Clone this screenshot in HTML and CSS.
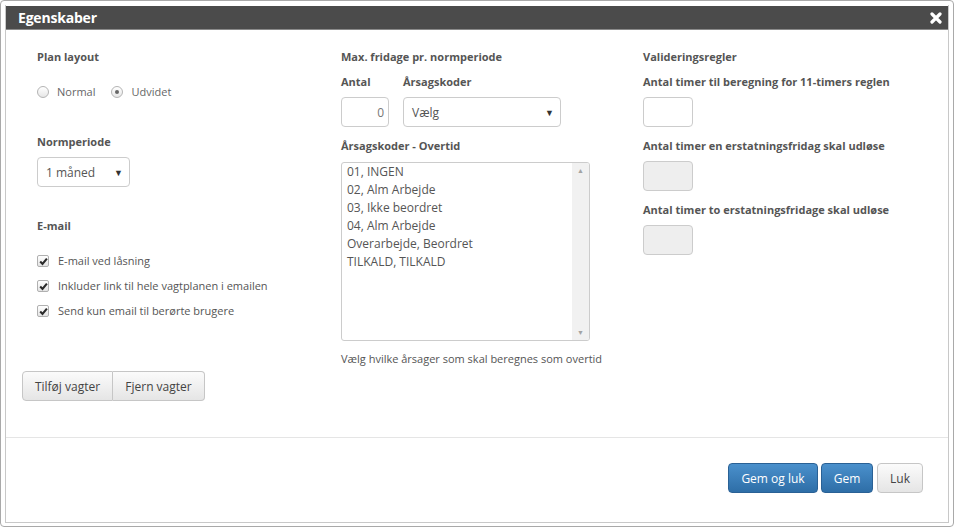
FILE: index.html
```html
<!DOCTYPE html>
<html lang="da">
<head>
<meta charset="utf-8">
<title>Egenskaber</title>
<link rel="stylesheet" href="styles.css">
</head>
<body>
<div class="dialog">
  <div class="frame">
    <div class="titlebar">
      <span class="title">Egenskaber</span>
      <span class="close"><svg width="12" height="12" viewBox="0 0 12 12"><path d="M2 2 L10 10 M10 2 L2 10" stroke="#fff" stroke-width="3.2" stroke-linecap="round"/></svg></span>
    </div>
    <div class="content">
      <div class="cols">
        <div class="col">
          <div class="lbl">Plan layout</div>
          <div class="radios">
            <span class="opt"><span class="radio"></span>Normal</span>
            <span class="opt"><span class="radio on"></span>Udvidet</span>
          </div>
          <div class="lbl mt32">Normperiode</div>
          <div class="select s-norm"><span>1 måned</span><span class="caret">▼</span></div>
          <div class="lbl mt30">E-mail</div>
          <div class="check first"><span class="box"><svg width="9" height="9" viewBox="0 0 9 9"><path d="M1.2 4.6 L3.5 7 L7.9 1.6" stroke="#2b2b2b" stroke-width="2.1" fill="none"/></svg></span>E-mail ved låsning</div>
          <div class="check"><span class="box"><svg width="9" height="9" viewBox="0 0 9 9"><path d="M1.2 4.6 L3.5 7 L7.9 1.6" stroke="#2b2b2b" stroke-width="2.1" fill="none"/></svg></span>Inkluder link til hele vagtplanen i emailen</div>
          <div class="check"><span class="box"><svg width="9" height="9" viewBox="0 0 9 9"><path d="M1.2 4.6 L3.5 7 L7.9 1.6" stroke="#2b2b2b" stroke-width="2.1" fill="none"/></svg></span>Send kun email til berørte brugere</div>
        </div>
        <div class="col">
          <div class="lbl">Max. fridage pr. normperiode</div>
          <div class="pair">
            <div class="pcol">
              <div class="lbl">Antal</div>
              <div class="input num"><span class="numval">0</span></div>
            </div>
            <div class="pcol">
              <div class="lbl">Årsagskoder</div>
              <div class="select s-aars"><span>Vælg</span><span class="caret">▼</span></div>
            </div>
          </div>
          <div class="lbl mt10">Årsagskoder - Overtid</div>
          <div class="listbox">
            <div class="items">
              <div>01, INGEN</div>
              <div>02, Alm Arbejde</div>
              <div>03, Ikke beordret</div>
              <div>04, Alm Arbejde</div>
              <div>Overarbejde, Beordret</div>
              <div>TILKALD, TILKALD</div>
            </div>
            <div class="scroll"><span class="arr">▲</span><span class="arr">▼</span></div>
          </div>
          <div class="help">Vælg hvilke årsager som skal beregnes som overtid</div>
        </div>
        <div class="col">
          <div class="lbl">Valideringsregler</div>
          <div class="lbl mt7">Antal timer til beregning for 11-timers reglen</div>
          <div class="input small"></div>
          <div class="lbl mt10">Antal timer en erstatningsfridag skal udløse</div>
          <div class="input small dis"></div>
          <div class="lbl mt10">Antal timer to erstatningsfridage skal udløse</div>
          <div class="input small dis"></div>
        </div>
      </div>
      <div class="btngroup">
        <span class="btn">Tilføj vagter</span><span class="btn">Fjern vagter</span>
      </div>
    </div>
    <div class="footer">
      <span class="btn primary wide">Gem og luk</span>
      <span class="btn primary">Gem</span>
      <span class="btn">Luk</span>
    </div>
  </div>
</div>
</body>
</html>
```
FILE: styles.css
```css
html, body {
  margin: 0;
  padding: 0;
  background: #fff;
}
body {
  font-family: "Open Sans", "Noto Sans", sans-serif;
  color: #555;
  font-size: 11px;
}
.dialog {
  width: 954px;
  height: 527px;
  box-sizing: border-box;
  border: 1px solid #a9a9a9;
  border-radius: 4px;
  padding: 4px 4px 3px 4px;
  display: flex;
  flex-direction: column;
}
.frame {
  flex: 1;
  border: 1px solid #c8c8c8;
  border-top: none;
  display: flex;
  flex-direction: column;
}
.titlebar {
  height: 23px;
  margin: 1px 0 0 0;
  background: #4b4b4b;
  border-bottom: 1px solid #8a8a8a;
  display: flex;
  align-items: center;
  justify-content: space-between;
  padding: 0 6px 0 12px;
}
.title {
  color: #fff;
  font-weight: 700;
  font-size: 14px;
  letter-spacing: -0.2px;
}
.close {
  display: flex;
  width: 12px;
  height: 12px;
}
.content {
  height: 407px;
  box-sizing: border-box;
  padding: 18px 15px 0 16px;
}
.cols {
  display: grid;
  grid-template-columns: 304px 302px 1fr;
  height: 319px;
}
.col {
  padding-left: 15px;
}
.lbl {
  font-weight: 700;
  font-size: 11px;
  line-height: 18px;
  color: #555;
  white-space: nowrap;
}
.mt7 { margin-top: 7px; }
.mt10 { margin-top: 10px; }
.mt30 { margin-top: 30px; }
.mt32 { margin-top: 32px; }
.radios {
  margin-top: 17px;
  display: flex;
  gap: 16px;
  line-height: 18px;
  color: #666;
}
.opt {
  display: flex;
  align-items: center;
}
.radio {
  width: 10px;
  height: 10px;
  border: 1px solid #b4b4b4;
  border-radius: 50%;
  background: linear-gradient(#fff, #e6e6e6);
  margin-right: 8px;
  position: relative;
}
.radio.on::after {
  content: "";
  position: absolute;
  left: 3px;
  top: 3px;
  width: 4px;
  height: 4px;
  border-radius: 50%;
  background: #666;
}
.select {
  margin-top: 6px;
  height: 30px;
  box-sizing: border-box;
  border: 1px solid #ccc;
  border-radius: 4px;
  display: flex;
  align-items: center;
  justify-content: space-between;
  padding: 0 6px 0 8px;
  font-size: 12px;
  color: #555;
  background: #fff;
}
.s-norm { width: 93px; }
.s-aars { width: 158px; padding-left: 8px; }
.caret {
  font-size: 9px;
  color: #333;
}
.check {
  margin-top: 7px;
  display: flex;
  align-items: center;
  line-height: 18px;
  color: #555;
}
.check.first { margin-top: 17px; }
.box {
  width: 10px;
  height: 10px;
  border: 1px solid #b0b0b0;
  border-radius: 2px;
  background: linear-gradient(#fff, #e4e4e4);
  margin-right: 9px;
  display: flex;
  align-items: center;
  justify-content: center;
}
.pair {
  margin-top: 7px;
  display: flex;
  gap: 14px;
}
.input {
  margin-top: 6px;
  height: 30px;
  box-sizing: border-box;
  border: 1px solid #ccc;
  border-radius: 4px;
  background: #fff;
  font-size: 12px;
  color: #555;
}
.input.num {
  width: 48px;
  display: flex;
  align-items: center;
  justify-content: flex-end;
  padding-right: 4px;
}
.numval { color: #777; }
.input.small { width: 50px; }
.input.dis { background: #eee; }
.listbox {
  margin-top: 7px;
  width: 249px;
  height: 179px;
  box-sizing: border-box;
  border: 1px solid #ccc;
  border-radius: 3px;
  display: flex;
  overflow: hidden;
}
.items {
  flex: 1;
  padding: 0 5px;
  font-size: 12px;
  line-height: 18px;
  color: #555;
}
.scroll {
  width: 17px;
  background: #f1f1f1;
  display: flex;
  flex-direction: column;
  justify-content: space-between;
  align-items: center;
  padding: 3px 0 2px;
}
.arr {
  font-size: 7px;
  color: #a3a3a3;
  line-height: 10px;
}
.help {
  margin-top: 9px;
  line-height: 18px;
  color: #555;
}
.btngroup {
  margin-top: 4px;
  display: flex;
}
.btn {
  height: 30px;
  box-sizing: border-box;
  border: 1px solid #c6c6c6;
  background: linear-gradient(#fbfbfb, #e5e5e5);
  color: #444;
  font-size: 12px;
  display: inline-flex;
  align-items: center;
  justify-content: center;
  padding: 0 11px;
  border-radius: 4px;
}
.btngroup .btn:first-child {
  border-radius: 4px 0 0 4px;
  width: 91px;
}
.btngroup .btn:last-child {
  border-radius: 0 4px 4px 0;
  border-left: none;
  width: 92px;
}
.footer {
  border-top: 1px solid #e5e5e5;
  flex: 1;
  display: flex;
  justify-content: flex-end;
  align-items: flex-start;
  padding: 25px 25px 0 0;
}
.footer .btn { width: 46px; padding: 0; margin-left: 4px; }
.footer .btn.primary {
  background: linear-gradient(#4a90cc, #2e6ea7);
  border-color: #2a6195;
  color: #fff;
  width: 52px;
}
.footer .btn.primary.wide { width: 90px; margin-left: 0; }
.footer .btn.primary + .btn.primary { margin-left: 3px; }
```
